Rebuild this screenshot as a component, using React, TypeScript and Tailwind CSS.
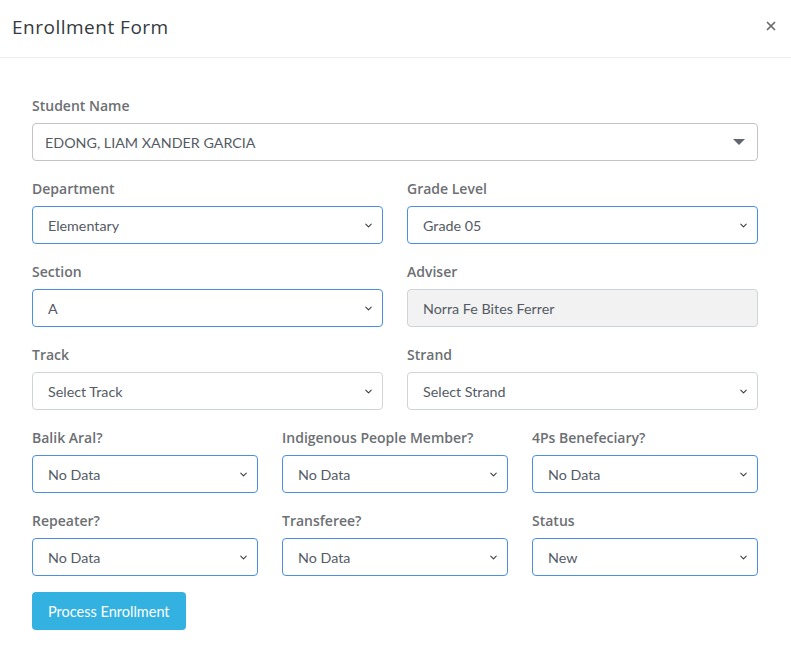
import { ChevronDown, X } from 'lucide-react'

interface SelectFieldProps {
  label: string
  value: string
  active?: boolean
}

const labelCls =
  "mb-[8px] h-[19px] text-[14px] leading-[20px] font-semibold text-[#6c6f73] font-['Open_Sans',sans-serif]"

function SelectField({ label, value, active }: SelectFieldProps) {
  return (
    <div className="flex flex-col">
      <label className={labelCls}>{label}</label>
      <div
        className={`h-[38px] rounded-[4px] border bg-white flex items-center pl-[15px] pr-[8px] ${
          active ? 'border-[#4a8fe3]' : 'border-[#cfd4d9]'
        }`}
      >
        <span className="flex-1 pt-[2px] text-[14.3px] text-[#545b64]">{value}</span>
        <ChevronDown className="h-[11px] w-[11px] text-[#343a40]" strokeWidth={2.2} />
      </div>
    </div>
  )
}

export default function App() {
  return (
    <div className="w-[791px] h-[659px] bg-white font-['Lato',sans-serif]">
      {/* Header */}
      <div className="h-[58px] border-b border-[#e9ecef] flex items-center justify-between pl-3 pr-[13px]">
        <h1 className="text-[19px] text-[#343a40] font-['Open_Sans',sans-serif] tracking-[0.5px] pb-[3px]">
          Enrollment Form
        </h1>
        <X className="h-[14px] w-[14px] text-[#6b6b6b] mb-[5px]" strokeWidth={3} />
      </div>

      {/* Body */}
      <div className="pt-[38px] pl-8 pr-[33px]">
        <div className="flex flex-col">
          <label className={labelCls}>Student Name</label>
          <div className="h-[38px] rounded-[4px] border border-[#c4c4c4] bg-white flex items-center pl-3 pr-[12px]">
            <span className="flex-1 pt-[2px] text-[14.3px] text-[#545b64]">EDONG, LIAM XANDER GARCIA</span>
            <span className="w-0 h-0 border-l-[6px] border-r-[6px] border-t-[6px] border-l-transparent border-r-transparent border-t-[#5f6670]" />
          </div>
        </div>

        <div className="grid grid-cols-2 gap-x-6 mt-[18px]">
          <SelectField label="Department" value="Elementary" active />
          <SelectField label="Grade Level" value="Grade 05" active />
        </div>

        <div className="grid grid-cols-2 gap-x-6 mt-[18px]">
          <SelectField label="Section" value="A" active />
          <div className="flex flex-col">
            <label className={labelCls}>Adviser</label>
            <div className="h-[38px] rounded-[4px] border border-[#cfd4d9] bg-[#f2f2f2] flex items-center pl-[15px]">
              <span className="pt-[2px] text-[14.3px] text-[#545b64]">Norra Fe Bites Ferrer</span>
            </div>
          </div>
        </div>

        <div className="grid grid-cols-2 gap-x-6 mt-[18px]">
          <SelectField label="Track" value="Select Track" />
          <SelectField label="Strand" value="Select Strand" />
        </div>

        <div className="grid grid-cols-3 gap-x-6 mt-[18px]">
          <SelectField label="Balik Aral?" value="No Data" active />
          <SelectField label="Indigenous People Member?" value="No Data" active />
          <SelectField label="4Ps Benefeciary?" value="No Data" active />
        </div>

        <div className="grid grid-cols-3 gap-x-6 mt-[18px]">
          <SelectField label="Repeater?" value="No Data" active />
          <SelectField label="Transferee?" value="No Data" active />
          <SelectField label="Status" value="New" active />
        </div>

        <button className="mt-4 h-[38px] px-4 pt-[1px] rounded-[4px] bg-[#33b1e1] text-white text-[14.5px]">
          Process Enrollment
        </button>
      </div>
    </div>
  )
}
